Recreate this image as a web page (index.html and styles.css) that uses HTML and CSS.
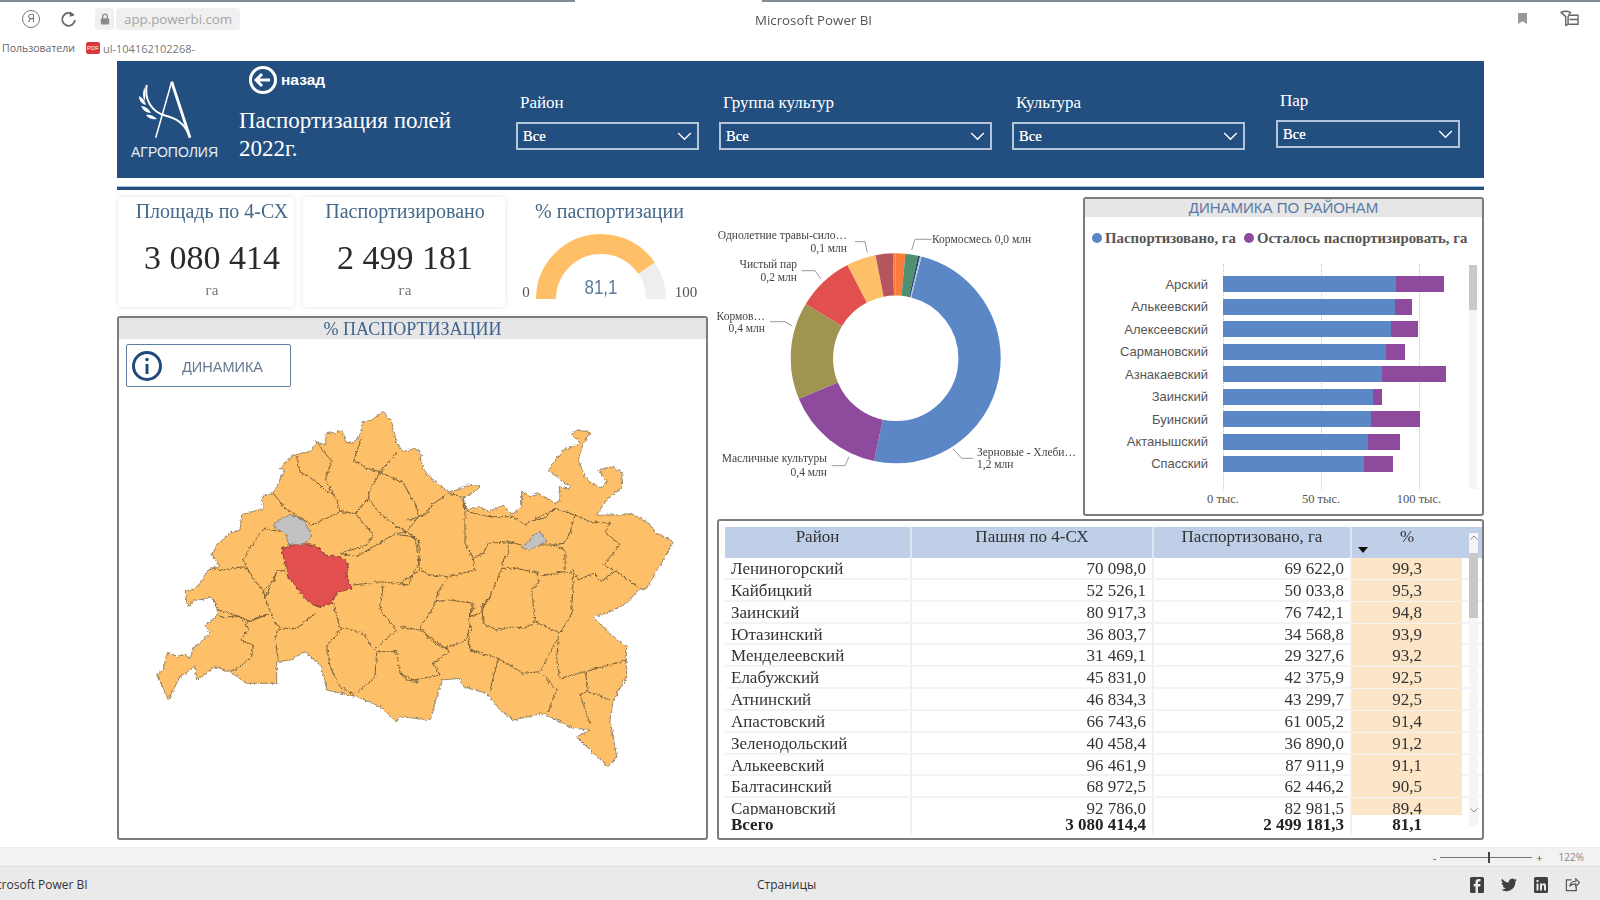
FILE: index.html
```html
<!DOCTYPE html>
<html lang="ru">
<head>
<meta charset="utf-8">
<title>Microsoft Power BI</title>
<link rel="stylesheet" href="styles.css">
</head>
<body>
<div class="page">
  <div class="chrome">
    <div class="top-line"></div>
    <div class="chrome-row">
      <div class="nav">
        <span class="ya">Я</span>
        <svg class="reload" viewBox="0 0 20 20" width="20" height="20"><path d="M14.5 6.2A6.4 6.4 0 1 0 16 11" fill="none" stroke="#666" stroke-width="1.8"/><path d="M11 2.4l4.6 3.8-5 1.6z" fill="#666"/></svg>
        <span class="lock"><svg viewBox="0 0 12 14" width="10" height="12"><rect x="1" y="6" width="10" height="7.5" rx="1" fill="#8a8a8a"/><path d="M3.2 6V4a2.8 2.8 0 0 1 5.6 0v2" fill="none" stroke="#8a8a8a" stroke-width="1.5"/></svg></span>
        <span class="url">app.powerbi.com</span>
      </div>
      <div class="tab-title">Microsoft Power BI</div>
      <div class="chrome-actions">
        <svg viewBox="0 0 10 12" width="9" height="11"><path d="M0 0h10v12L5 9 0 12z" fill="#9a9a9a"/></svg>
        <svg viewBox="0 0 20 18" width="19" height="17"><path d="M1 2.500C4 1 8 1 11 2.500L8.500 7v8L6 16.500V7z" fill="none" stroke="#666" stroke-width="1.500" stroke-linejoin="round"/><path d="M10 5.500h9V15H9M10 10h9" fill="none" stroke="#666" stroke-width="1.500"/></svg>
      </div>
    </div>
    <div class="bookmarks">
      <span>Пользователи</span>
      <span class="pdf">PDF</span>
      <span class="bm-link">ul-104162102268-</span>
    </div>
  </div>

  <main class="report">
    <header class="banner">
      <div class="brand">
        <svg class="logo" viewBox="0 0 110 80" width="110" height="80">
          <path d="M51.700 16.700 35.700 72.700" stroke="#fff" stroke-width="1.500" fill="none"/>
          <path d="M51.700 16.700 70 72.700" stroke="#fff" stroke-width="2.800" fill="none"/>
          <path d="M26.700 20C24 35 32 47 45 50.500 55 53 64 57 69.500 71" stroke="#fff" stroke-width="2" fill="none"/>
          <path d="M24.500 22c1 6 1 10 0 14-2-4-2-9 0-14zM19 31c4 2 6 5 7 9-4-1-7-4-7-9zM21 41c4 0 8 3 10 7-5 0-8-3-10-7zM26 50c4-1 8 1 11 4-4 1-8 0-11-4z" fill="#fff"/>
        </svg>
        <div class="brand-name">АГРОПОЛИЯ</div>
      </div>
      <div class="heading">
        <div class="back">
          <svg viewBox="0 0 30 30" width="30" height="30"><circle cx="15" cy="15" r="12.500" fill="none" stroke="#fff" stroke-width="3"/><path d="M22 15H9M14 9l-6 6 6 6" fill="none" stroke="#fff" stroke-width="3"/></svg>
          <span>назад</span>
        </div>
        <h1>Паспортизация полей<br>2022г.</h1>
      </div>
      <div class="slicer w-district"><label>Район</label><div class="select"><span>Все</span><svg viewBox="0 0 16 10" width="15" height="9"><path d="M1 1l7 7 7-7" fill="none" stroke="#fff" stroke-width="1.500"/></svg></div></div>
      <div class="slicer w-group"><label>Группа культур</label><div class="select"><span>Все</span><svg viewBox="0 0 16 10" width="15" height="9"><path d="M1 1l7 7 7-7" fill="none" stroke="#fff" stroke-width="1.500"/></svg></div></div>
      <div class="slicer w-crop"><label>Культура</label><div class="select"><span>Все</span><svg viewBox="0 0 16 10" width="15" height="9"><path d="M1 1l7 7 7-7" fill="none" stroke="#fff" stroke-width="1.500"/></svg></div></div>
      <div class="slicer w-fallow"><label>Пар</label><div class="select"><span>Все</span><svg viewBox="0 0 16 10" width="15" height="9"><path d="M1 1l7 7 7-7" fill="none" stroke="#fff" stroke-width="1.500"/></svg></div></div>
    </header>
    <div class="divider"></div>

    <div class="board">
      <div class="col-left">
        <div class="kpis">
          <section class="kpi k1"><h2>Площадь по 4-СХ</h2><div class="num">3 080 414</div><div class="unit">га</div></section>
          <section class="kpi k2"><h2>Паспортизировано</h2><div class="num">2 499 181</div><div class="unit">га</div></section>
          <section class="gauge">
            <h2>% паспортизации</h2>
            <svg viewBox="0 0 203 85" width="203" height="85">
              <g transform="rotate(180 96 77)">
                <circle cx="96" cy="77" r="55" fill="none" stroke="#ffbf66" stroke-width="20" pathLength="360" stroke-dasharray="146 360"/>
                <circle cx="96" cy="77" r="55" fill="none" stroke="#eeeeee" stroke-width="20" pathLength="360" stroke-dasharray="34 360" stroke-dashoffset="-146"/>
              </g>
              <text class="g-val" x="96" y="72" text-anchor="middle" textLength="33" lengthAdjust="spacingAndGlyphs">81,1</text>
              <text class="g-end" x="21" y="75" text-anchor="middle">0</text>
              <text class="g-end" x="181" y="75" text-anchor="middle">100</text>
            </svg>
          </section>
        </div>

        <section class="panel map-panel">
          <h3 class="band serif">% ПАСПОРТИЗАЦИИ</h3>
          <div class="dyn-btn">
            <svg viewBox="0 0 32 32" width="32" height="32"><circle cx="16" cy="16" r="13.500" fill="none" stroke="#1f4a7a" stroke-width="3"/><circle cx="16" cy="9.500" r="1.800" fill="#1f4a7a"/><path d="M16 14v10" stroke="#1f4a7a" stroke-width="3"/></svg>
            <span>ДИНАМИКА</span>
          </div>
          <svg class="map" viewBox="0 0 1650 1110" width="550" height="370">
            <defs>
              <filter id="rough" x="-3%" y="-3%" width="106%" height="106%">
                <feTurbulence type="fractalNoise" baseFrequency="0.11" numOctaves="3" seed="4" result="n"/>
                <feDisplacementMap in="SourceGraphic" in2="n" scale="12" xChannelSelector="R" yChannelSelector="G"/>
              </filter>
            </defs>
            <g filter="url(#rough)">
              <path class="land" d="M50 825L70 810 78 770 85 757 110 770 135 762 150 775 160 745 190 720 210 700 195 675 225 655 235 640 220 600 205 590 195 598 160 600 143 620 135 572 160 570 180 550 210 505 240 498 215 465 235 430 270 400 300 390 305 345 370 325 365 290 400 280 435 210 420 205 460 165 510 155 530 125 555 135 560 100 610 95 615 125 635 130 655 115 665 85 670 65 695 60 730 35 755 65 770 130 790 155 825 145 845 165 840 175 855 215 880 240 925 275 950 270 985 255 1020 260 1005 275 965 295 980 330 1020 320 1045 335 1070 325 1090 315 1115 345 1145 320 1145 275 1170 290 1195 280 1245 310 1260 300 1258 260 1285 268 1290 260 1225 210 1270 150 1310 135 1320 125 1295 105 1310 90 1350 97 1330 130 1315 180 1335 230 1355 250 1385 265 1400 245 1375 210 1415 200 1445 215 1448 260 1400 300 1370 345 1435 345 1475 340 1525 370 1550 400 1600 425 1570 480 1520 565 1495 570 1460 610 1400 640 1358 650 1420 710 1460 740 1458 790 1460 830 1420 900 1410 960 1430 1070 1405 1100 1360 1060 1310 1010 1350 990 1300 985 1210 940 1120 960 1080 930 1040 880 970 860 960 835 905 840 870 960 780 950 770 965 720 920 650 890 560 870 545 800 495 755 450 780 410 785 410 850 320 850 270 815 225 800 170 840 165 800 120 830 85 900 65 855Z"/>
              <path class="bound" d="M665 115L640 180 680 205 720 215 770 160M530 125L575 185 555 240 590 300 600 335 645 340M470 170L480 215 530 245 555 270 585 285M720 215L690 270 685 295 645 340 700 405 680 435 600 460M400 280L435 325 470 345 515 375 570 350 600 335M685 295L720 340 770 380 800 395M720 215L790 250 825 310 835 350 800 395M600 460L650 470 700 440 770 400 800 395 835 420 840 480 805 555 770 550 720 545 640 555M370 385L320 460 310 480 340 540 370 570 400 545 410 515 435 510M370 385L420 395M210 505L250 510 310 500 330 520M220 595L235 630 300 650 330 665 390 640M410 515L375 595 395 640 400 660 420 685 470 685 525 640M370 570L375 595M240 650L300 650 320 680M390 640L345 655 320 665 325 690 300 720 340 735 335 770 295 805 270 815M420 685L405 715 415 780M580 610L600 685 620 685 670 700 700 750 770 690 720 630 730 550M605 685L560 740 570 800 600 860 650 890M710 755L705 830 650 880M710 755L770 755 780 820 800 840 840 845"/>
              <g transform="translate(780 0)">
                <path class="bound" d="M0 820L40 840 120 825 100 790 150 755 60 690 0 680M0 550L60 510 90 525 145 530 225 510 220 475 195 430 195 335 190 290 145 280 95 315 80 340 30 360 20 360M0 405L45 410 60 510M220 475L250 460 265 430 325 425 325 460 305 490 305 505 350 505 415 520 415 550 395 570 405 665 375 685 345 680 290 690 250 670 245 620 270 590 305 505M145 530L120 565 105 605 90 640 60 680 90 720 130 745 190 725 215 690 205 660 220 610 150 600 105 605M225 620L205 650 240 640 270 590M415 530L490 515 520 520 515 640 480 700 405 665M205 690L210 750 295 775 320 790 370 820 420 815 475 710M295 775L270 870M430 825L470 870 445 935M475 710L470 780 480 835 555 815 610 800 680 780M555 815L565 870 540 885 570 970M565 875L630 900M325 425L365 435M420 435L460 435 495 450 495 510M200 335L270 350 340 350 375 375 390 365 465 325 525 345 510 400 490 430 460 435M465 325L430 355 385 365M525 345L570 365 630 370 615 395 660 435 610 495 650 515 720 565M520 510L535 540 580 520 605 545 650 510"/>
              </g>
              <path class="red" d="M425 445L460 435 490 430 530 440 555 465 600 470 625 490 620 530 635 565 590 580 575 610 545 620 520 615 490 590 460 550 445 535 435 490Z"/>
              <path class="grey" d="M400 380L420 355 455 345 490 360 505 385 515 410 490 435 465 430 445 435 440 410 425 395Z"/>
              <path class="grey" d="M1145 440L1165 425 1180 405 1200 395 1220 425 1200 435 1170 450 1150 445Z"/>
            </g>
          </svg>
        </section>
      </div>

      <div class="col-right">
        <div class="right-top">
          <svg class="donut" viewBox="17 -23 365 319" width="365" height="319">
            <g transform="rotate(-90 195.700 138.300)" fill="none" stroke-width="42.300">
              <circle cx="195.700" cy="138.300" r="83.850" stroke="#5b87c7" pathLength="360" stroke-dasharray="177.600 360" stroke-dashoffset="-14.300"/>
              <circle cx="195.700" cy="138.300" r="83.850" stroke="#8e4a9c" pathLength="360" stroke-dasharray="55.400 360" stroke-dashoffset="-191.900"/>
              <circle cx="195.700" cy="138.300" r="83.850" stroke="#a09450" pathLength="360" stroke-dasharray="53.800 360" stroke-dashoffset="-247.300"/>
              <circle cx="195.700" cy="138.300" r="83.850" stroke="#e24f4f" pathLength="360" stroke-dasharray="31.500 360" stroke-dashoffset="-301.100"/>
              <circle cx="195.700" cy="138.300" r="83.850" stroke="#fdbf68" pathLength="360" stroke-dasharray="16.300 360" stroke-dashoffset="-332.600"/>
              <circle cx="195.700" cy="138.300" r="83.850" stroke="#b5565f" pathLength="360" stroke-dasharray="9.500 360" stroke-dashoffset="-348.900"/>
              <circle cx="195.700" cy="138.300" r="83.850" stroke="#fb7b3b" pathLength="360" stroke-dasharray="1.600 360" stroke-dashoffset="-358.400"/>
              <circle cx="195.700" cy="138.300" r="83.850" stroke="#fb7b3b" pathLength="360" stroke-dasharray="5.400 360"/>
              <circle cx="195.700" cy="138.300" r="83.850" stroke="#4f9070" pathLength="360" stroke-dasharray="6.900 360" stroke-dashoffset="-5.400"/>
              <circle cx="195.700" cy="138.300" r="83.850" stroke="#1f4a7a" pathLength="360" stroke-dasharray="1.200 360" stroke-dashoffset="-12.300"/>
              <circle cx="195.700" cy="138.300" r="83.850" stroke="#b8c4d4" pathLength="360" stroke-dasharray="0.800 360" stroke-dashoffset="-13.500"/>
            </g>
            <g class="leaders">
              <path d="M155 21.700h10l2.300 10.600M231.700 19.300h-16.700l-3.300 10.700M101.700 50.700h13.300l6 8.300M70 101.700h15l7.300 4.300M131.700 245.700h13.300l4-9M253.300 229l8.400 9.300h11.600"/>
            </g>
            <g class="lbl">
              <text x="147" y="19" text-anchor="end">Однолетние травы-сило…</text>
              <text x="147" y="32" text-anchor="end">0,1 млн</text>
              <text x="232" y="23">Кормосмесь 0,0 млн</text>
              <text x="97" y="48" text-anchor="end">Чистый пар</text>
              <text x="97" y="61" text-anchor="end">0,2 млн</text>
              <text x="65" y="100" text-anchor="end">Кормов…</text>
              <text x="65" y="112" text-anchor="end">0,4 млн</text>
              <text x="127" y="242" text-anchor="end">Масличные культуры</text>
              <text x="127" y="256" text-anchor="end">0,4 млн</text>
              <text x="277" y="236">Зерновые - Хлеби…</text>
              <text x="277" y="248">1,2 млн</text>
            </g>
          </svg>

          <section class="panel bars-panel">
            <h3 class="band sans">ДИНАМИКА ПО РАЙОНАМ</h3>
            <div class="legend">
              <span class="dot c-blue"></span><span class="leg-a">Паспортизовано, га</span>
              <span class="dot c-purple"></span><span>Осталось паспортизировать, га</span>
            </div>
            <div class="chart">
              <div class="grid-lines"><i></i><i></i><i></i></div>
              <div class="bar-row"><span class="b-name">Арский</span><span class="bar c-blue" style="width:172.8px"></span><span class="bar c-purple" style="width:48.7px"></span></div>
              <div class="bar-row"><span class="b-name">Алькеевский</span><span class="bar c-blue" style="width:172px"></span><span class="bar c-purple" style="width:16.8px"></span></div>
              <div class="bar-row"><span class="b-name">Алексеевский</span><span class="bar c-blue" style="width:167.8px"></span><span class="bar c-purple" style="width:26.8px"></span></div>
              <div class="bar-row"><span class="b-name">Сармановский</span><span class="bar c-blue" style="width:162.8px"></span><span class="bar c-purple" style="width:19.1px"></span></div>
              <div class="bar-row"><span class="b-name">Азнакаевский</span><span class="bar c-blue" style="width:159.4px"></span><span class="bar c-purple" style="width:63.8px"></span></div>
              <div class="bar-row"><span class="b-name">Заинский</span><span class="bar c-blue" style="width:150.3px"></span><span class="bar c-purple" style="width:8.4px"></span></div>
              <div class="bar-row"><span class="b-name">Буинский</span><span class="bar c-blue" style="width:147.7px"></span><span class="bar c-purple" style="width:49.3px"></span></div>
              <div class="bar-row"><span class="b-name">Актанышский</span><span class="bar c-blue" style="width:145.3px"></span><span class="bar c-purple" style="width:32.2px"></span></div>
              <div class="bar-row"><span class="b-name">Спасский</span><span class="bar c-blue" style="width:140.9px"></span><span class="bar c-purple" style="width:29.5px"></span></div>
              <div class="v-scroll"><i></i></div>
            </div>
            <div class="axis"><span>0 тыс.</span><span>50 тыс.</span><span>100 тыс.</span></div>
          </section>
        </div>

        <section class="panel table-panel">
          <div class="t-row t-head"><div>Район</div><div>Пашня по 4-СХ</div><div>Паспортизовано, га</div><div class="sorted">%<i class="sort"></i></div></div>
          <div class="t-body">
            <div class="t-row"><div>Лениногорский</div><div>70 098,0</div><div>69 622,0</div><div>99,3</div></div>
            <div class="t-row"><div>Кайбицкий</div><div>52 526,1</div><div>50 033,8</div><div>95,3</div></div>
            <div class="t-row"><div>Заинский</div><div>80 917,3</div><div>76 742,1</div><div>94,8</div></div>
            <div class="t-row"><div>Ютазинский</div><div>36 803,7</div><div>34 568,8</div><div>93,9</div></div>
            <div class="t-row"><div>Менделеевский</div><div>31 469,1</div><div>29 327,6</div><div>93,2</div></div>
            <div class="t-row"><div>Елабужский</div><div>45 831,0</div><div>42 375,9</div><div>92,5</div></div>
            <div class="t-row"><div>Атнинский</div><div>46 834,3</div><div>43 299,7</div><div>92,5</div></div>
            <div class="t-row"><div>Апастовский</div><div>66 743,6</div><div>61 005,2</div><div>91,4</div></div>
            <div class="t-row"><div>Зеленодольский</div><div>40 458,4</div><div>36 890,0</div><div>91,2</div></div>
            <div class="t-row"><div>Алькеевский</div><div>96 461,9</div><div>87 911,9</div><div>91,1</div></div>
            <div class="t-row"><div>Балтасинский</div><div>68 972,5</div><div>62 446,2</div><div>90,5</div></div>
            <div class="t-row"><div>Сармановский</div><div>92 786,0</div><div>82 981,5</div><div>89,4</div></div>
          </div>
          <div class="t-row t-total"><div>Всего</div><div>3 080 414,4</div><div>2 499 181,3</div><div>81,1</div></div>
          <div class="t-scroll">
            <svg viewBox="0 0 8 5" width="8" height="5"><path d="M.5 4.500L4 1l3.500 3.500" fill="none" stroke="#888"/></svg>
            <i></i>
            <svg class="t-down" viewBox="0 0 8 5" width="8" height="5"><path d="M.5.5L4 4 7.500.5" fill="none" stroke="#888"/></svg>
          </div>
        </section>
      </div>
    </div>
  </main>

  <div class="zoom-strip">
    <span class="z-sign">-</span><span class="z-slider"><i></i></span><span class="z-sign">+</span><span class="z-val">122%</span>
  </div>
  <footer class="footer">
    <span class="f-left">Microsoft Power BI</span>
    <span class="f-center">Страницы</span>
    <div class="f-icons">
      <svg viewBox="0 0 14 16" width="14" height="16"><rect width="14" height="16" rx="1.500" fill="#3f3f3f"/><path d="M8 16V9.500h2.200l.3-2.500H8V5.600c0-.8.3-1.200 1.200-1.200h1.300V2.100H8.700C6.500 2.100 5.500 3.300 5.500 5.300V7H3.700v2.500h1.800V16z" fill="#eaeaea"/></svg>
      <svg viewBox="0 0 16 14" width="16" height="14"><path d="M16 2c-.6.300-1.200.4-1.900.5.700-.4 1.200-1 1.400-1.800-.6.400-1.300.6-2 .8A3.300 3.300 0 0 0 7.900 4.500 9.300 9.300 0 0 1 1.100.7a3.300 3.300 0 0 0 1 4.400c-.5 0-1-.2-1.500-.4 0 1.600 1.100 2.900 2.600 3.200-.5.100-1 .2-1.500.1.400 1.300 1.600 2.200 3.100 2.300A6.600 6.600 0 0 1 0 11.600 9.300 9.300 0 0 0 14.400 3.300c.6-.4 1.200-.8 1.600-1.300z" fill="#3f3f3f"/></svg>
      <svg viewBox="0 0 14 16" width="14" height="16"><rect width="14" height="16" rx="1.500" fill="#3f3f3f"/><path d="M2.500 6.500h2v7h-2zM2.500 3h2v2h-2zM6 6.500h2v1c.5-.8 1.200-1.200 2-1.200 1.500 0 2 1 2 2.700v4.500h-2V9.500c0-.8-.3-1.300-1-1.300s-1 .5-1 1.300v4H6z" fill="#eaeaea"/></svg>
      <svg viewBox="0 0 16 16" width="15" height="15"><path d="M7 3H1.500v11.500H12V10" fill="none" stroke="#555" stroke-width="1.300"/><path d="M5 10c.5-3.500 3-5.500 6.500-5.500V2L15.500 6l-4 4V7.300C8.500 7.300 6.500 8 5 10z" fill="none" stroke="#555" stroke-width="1.200"/></svg>
    </div>
  </footer>
</div>
</body>
</html>
```

FILE: styles.css
```css
* { box-sizing: border-box; }
html, body { margin: 0; padding: 0; background: #fff; }
.page {
  width: 1600px; height: 900px; overflow: hidden;
  display: flex; flex-direction: column;
  font-family: "Liberation Serif", serif; color: #333;
  filter: blur(0.5px);
}

/* browser chrome */
.chrome { height: 61px; display: flex; flex-direction: column; font-family: "Open Sans", sans-serif; }
.top-line { height: 2px; background: linear-gradient(to right, #7f8c96 0, #7f8c96 575px, #fff 575px, #fff 762px, #7f8c96 762px); }
.chrome-row { height: 33px; display: flex; align-items: center; justify-content: space-between; position: relative; padding: 0 21px 0 22px; }
.nav { display: flex; align-items: center; }
.ya { width: 18px; height: 18px; border: 1.5px solid #777; border-radius: 50%; font: 10px/15px "Liberation Sans", sans-serif; text-align: center; color: #666; }
.reload { margin-left: 19px; }
.lock { margin-left: 16px; width: 19px; height: 22px; background: #f0f0f0; border-radius: 4px; display: flex; align-items: center; justify-content: center; }
.url { margin-left: 2px; width: 124px; height: 22px; background: #f0f0f0; border-radius: 4px; font-size: 13.3px; line-height: 22px; color: #a5a5a5; padding-left: 8px; }
.tab-title { position: absolute; left: 755px; margin-top: 2px; font-size: 13.3px; color: #555; }
.chrome-actions { display: flex; align-items: center; gap: 33px; }
.bookmarks { height: 26px; display: flex; align-items: center; font-size: 10.5px; color: #666; padding-left: 2px; background: #fff; }
.pdf { margin-left: 11px; width: 14px; height: 12px; background: #d9363e; color: #fff; font: 6px/12px "Liberation Sans", sans-serif; text-align: center; border-radius: 2px; }
.bm-link { margin-left: 3px; font-size: 11px; color: #777; }

/* report */
.report { flex: none; height: 779px; margin-left: 117px; width: 1367px; display: flex; flex-direction: column; }
.banner { height: 117px; background: #224e80; display: flex; align-items: flex-start; color: #fff; }
.brand { width: 123px; padding: 4px 0 0 3px; }
.logo { display: block; }
.brand-name { font: 14px/16px "Liberation Sans", sans-serif; margin: -1px 0 0 11px; color: #e9eef4; }
.heading { width: 276px; }
.back { display: flex; align-items: center; height: 30px; margin: 4px 0 0 8px; font: bold 15.5px "Liberation Sans", sans-serif; gap: 3px; }
h1 { margin: 12px 0 0 -1px; font-weight: normal; font-size: 23px; line-height: 27.5px; }
.slicer { margin-top: 32px; }
.slicer label { display: block; height: 29px; font-size: 17px; line-height: 20px; padding-left: 4px; }
.select { height: 28px; border: 2px solid #b4c5db; display: flex; align-items: center; justify-content: space-between; padding: 0 5px 0 5px; font-size: 14.5px; text-shadow: 0 0 .5px #fff; }
.w-district { width: 183px; margin-right: 20px; }
.w-group { width: 273px; margin-right: 20px; }
.w-crop { width: 233px; margin-right: 31px; }
.w-fallow { width: 184px; margin-top: 30px; }

.divider { height: 4px; margin-top: 8px; background: #224e80; border-top: 1px solid #a9c0da; }

.board { display: grid; grid-template-columns: 591px 767px; column-gap: 9px; margin-top: 7px; height: 643px; }
.col-left { display: flex; flex-direction: column; gap: 8px; }
.col-right { display: flex; flex-direction: column; gap: 3px; }

.kpis { height: 111px; display: flex; padding-left: 1px; }
.kpi { height: 110px; text-align: center; box-shadow: 0 0 5px rgba(0,0,0,.1); }
.k1 { width: 176px; padding-left: 12px; }
.k2 { width: 202px; margin-left: 9px; padding-left: 2px; }
.kpi h2, .gauge h2 { margin: 3px 0 0; font-size: 20px; line-height: 22px; font-weight: normal; color: #45688a; white-space: nowrap; }
.gauge h2 { padding-left: 6px; margin-bottom: 1px; }
.num { font-size: 34px; line-height: 40px; margin-top: 16px; color: #2b2b2b; white-space: nowrap; }
.unit { font-size: 15px; line-height: 18px; margin-top: 3px; color: #777; }
.gauge { width: 203px; text-align: center; }
.gauge svg { display: block; margin-top: -1px; }
.g-val { font: 20px "Liberation Sans", sans-serif; fill: #5c7a9a; }
.g-end { font: 15px "Liberation Serif", serif; fill: #555; }

.panel { border: 2px solid #7c7c7c; border-radius: 3px; background: #fff; position: relative; }
.band { margin: 0; background: #e6e6e6; text-align: center; font-weight: normal; color: #3f648f; }
.band.serif { height: 21px; font-size: 18px; line-height: 23px; }
.band.sans { height: 18px; font: 15px/18px "Liberation Sans", sans-serif; color: #5a7aa5; }

.map-panel { height: 524px; }
.dyn-btn { width: 165px; height: 43px; margin: 5px 0 0 7px; border: 1.5px solid #5d7fa0; border-radius: 2px; display: flex; align-items: center; padding-left: 4px; font: 14.5px "Liberation Sans", sans-serif; color: #667a90; }
.dyn-btn span { margin-left: 19px; padding-top: 2px; }
.map { display: block; margin: 13px 0 0 21px; }
.land { fill: #fdbf68; stroke: #85735a; stroke-width: 2.5; stroke-linejoin: round; }
.bound { fill: none; stroke: #63512f; stroke-width: 2.6; stroke-linejoin: round; }
.red { fill: #e24f4f; stroke: #6d3a2c; stroke-width: 2.5; }
.grey { fill: #c2c2c4; stroke: #77736a; stroke-width: 2.5; }

.right-top { display: flex; height: 319px; }
.donut { display: block; flex: none; width: 365px; }
.leaders path { fill: none; stroke: #999; stroke-width: 1; }
.lbl text { font: 11.5px "Liberation Serif", serif; fill: #444; }

.bars-panel { width: 402px; margin-left: 1px; }
.legend { display: flex; align-items: center; height: 18px; margin-top: 12px; padding-left: 7px; font-size: 14.8px; font-weight: bold; color: #555; white-space: nowrap; }
.dot { width: 10px; height: 10px; border-radius: 50%; margin-right: 3px; flex: none; }
.leg-a { margin-right: 8px; }
.c-blue { background: #5b87c7; }
.c-purple { background: #8e4a9c; }
.chart { position: relative; height: 226px; margin-top: 17px; padding-top: 9px; }
.grid-lines { position: absolute; top: 0; bottom: 0; left: 138px; width: 197px; display: flex; justify-content: space-between; }
.grid-lines i { width: 0; border-left: 1px dotted #c4c4c4; }
.bar-row { position: relative; display: flex; align-items: center; height: 22.47px; }
.b-name { width: 123px; margin-right: 15px; text-align: right; font: 13px "Liberation Sans", sans-serif; color: #555; }
.bar { height: 16px; flex: none; }
.v-scroll { position: absolute; left: 384px; top: 1px; bottom: 1px; width: 8px; background: #f4f4f4; }
.v-scroll i { display: block; height: 45px; background: #c8c8c8; }
.axis { display: flex; margin: 1px 0 0 89px; font-size: 12.5px; line-height: 16px; color: #555; }
.axis span { width: 98px; text-align: center; }

.table-panel { height: 321px; padding: 6px 0 0 6px; font-size: 17px; }
.t-row { display: grid; grid-template-columns: 185px 242px 198px 112px; height: 21.85px; line-height: 21px; }
.t-row > div { padding: 0 6px; text-align: right; border-left: 2px solid #eef0f3; white-space: nowrap; }
.t-row > div:first-child { text-align: left; border-left: 0; }
.t-row > div:nth-child(4) { text-align: center; }
.t-head { height: 31px; background: #bfcfe8; color: #333; line-height: 20px; }
.t-head > div, .t-head > div:first-child { text-align: center; border-left-color: #dde5f1; }
.sorted { position: relative; }
.sort { position: absolute; left: 6px; top: 20px; width: 0; height: 0; border: 5px solid transparent; border-top: 6px solid #111; border-bottom: 0; }
.t-body { height: 257px; overflow: hidden; }
.t-body .t-row { border-bottom: 2px solid #f3f3f3; }
.t-body .t-row > div:nth-child(4) { background: #fde6c8; }
.t-total { font-weight: bold; height: 20px; line-height: 20px; color: #222; }
.t-scroll { position: absolute; left: 750px; top: 12px; width: 9px; height: 293px; background: #f5f5f5; display: flex; flex-direction: column; align-items: center; padding-top: 2px; }
.t-scroll i { display: block; width: 9px; height: 65px; margin-top: 13px; background: #c8c8c8; }
.t-down { margin-top: auto; margin-bottom: 13px; }

/* bottom */
.zoom-strip { margin-top: 7px; height: 20px; background: #f3f2f1; border-top: 1px solid #ececec; border-bottom: 1px solid #dcdcdc; display: flex; align-items: center; justify-content: flex-end; font: 10px "Open Sans", sans-serif; color: #888; padding-right: 16px; }
.z-sign { color: #555; font-size: 11px; }
.z-slider { width: 92px; height: 1px; background: #777; margin: 0 4px; position: relative; }
.z-slider i { position: absolute; left: 48px; top: -5px; width: 2px; height: 11px; background: #444; }
.z-val { margin-left: 16px; }
.footer { height: 33px; background: #eaeaea; display: flex; align-items: center; position: relative; padding-top: 2px; font: 12px "Open Sans", sans-serif; color: #333; }
.f-left { margin-left: -18px; }
.f-center { position: absolute; left: 757px; }
.f-icons { position: absolute; left: 1470px; display: flex; align-items: center; gap: 17px; }
```
